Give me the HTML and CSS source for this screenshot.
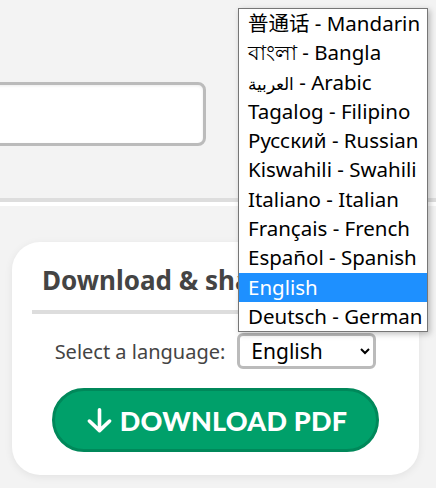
FILE: index.html
```html
<!DOCTYPE html>
<html lang="en">
<head>
<meta charset="utf-8">
<title>Download</title>
<link rel="stylesheet" href="styles.css">
</head>
<body>
<div class="top">
  <input class="search" type="text" aria-label="Name">
</div>
<div class="divider"></div>
<section class="card">
  <h2 class="card-title">Download &amp; share</h2>
  <div class="lang-row">
    <label class="lang-label" for="lang">Select a language:</label>
    <select id="lang" class="lang-select">
      <option>English</option>
    </select>
  </div>
  <button class="dl-btn" type="button">
    <svg class="dl-icon" viewBox="0 0 24 24" width="27" height="27" aria-hidden="true">
      <path d="M12 2.5V21M3 12.5L12 21l9-8.5" fill="none" stroke="#fff" stroke-width="3.2" stroke-linecap="round" stroke-linejoin="round"/>
    </svg>
    <span>DOWNLOAD PDF</span>
  </button>
</section>

<ul class="dropdown">
  <li>普通话 - Mandarin</li>
  <li>বাংলা - Bangla</li>
  <li><span class="ar">العربية</span> - Arabic</li>
  <li>Tagalog - Filipino</li>
  <li>Русский - Russian</li>
  <li>Kiswahili - Swahili</li>
  <li>Italiano - Italian</li>
  <li>Français - French</li>
  <li>Español - Spanish</li>
  <li class="selected">English</li>
  <li>Deutsch - German</li>
</ul>
</body>
</html>
```

FILE: styles.css
```css
* { box-sizing: border-box; }

html, body {
  margin: 0;
  padding: 0;
}

body {
  background: #f3f3f3;
  font-family: "Noto Sans", "Noto Sans CJK SC", sans-serif;
  color: #444;
  width: 436px;
  height: 488px;
  overflow: hidden;
  position: relative;
}

.top {
  height: 198px;
  padding-top: 82px;
}

.search {
  display: block;
  margin-left: -120px;
  width: 326px;
  height: 64px;
  border: 3px solid #bbb;
  border-radius: 8px;
  background: #fff;
  box-shadow: inset 0 1px 3px rgba(0,0,0,0.08);
  outline: none;
}

.divider {
  border-top: 4px solid #ddd;
  border-bottom: 4px solid #fff;
}

.card {
  margin: 36px 17px 0 12px;
  height: 233px;
  background: #fff;
  border-radius: 28px;
  box-shadow: 0 2px 8px rgba(0,0,0,0.07);
  padding: 21px 20px 0 20px;
}

.card-title {
  margin: 0;
  padding: 0 0 13px 10px;
  font-size: 26px;
  font-weight: 700;
  line-height: 34px;
  color: #444;
  border-bottom: 4px solid #ddd;
  white-space: nowrap;
}

.lang-row {
  display: flex;
  align-items: center;
  justify-content: center;
  gap: 12px;
  margin-top: 19px;
  height: 36px;
}

.lang-label {
  font-size: 20px;
  color: #444;
}

.lang-select {
  width: 139px;
  height: 36px;
  border: 3px solid #bbb;
  border-radius: 6px;
  background: #fff;
  font-family: "Noto Sans", sans-serif;
  font-size: 21px;
  color: #000;
  padding: 0 4px 0 7px;
}

.dl-btn {
  display: flex;
  align-items: center;
  justify-content: center;
  gap: 7px;
  width: 327px;
  height: 64px;
  margin: 19px auto 0;
  background: #00a06a;
  border: 3px solid #00885a;
  border-radius: 32px;
  color: #fff;
  font-family: "Lato", sans-serif;
  font-weight: 900;
  font-size: 27px;
  letter-spacing: 0.2px;
  cursor: pointer;
  padding: 0 0 0 2px;
}

.dl-icon { display: block; }

.dropdown {
  position: absolute;
  left: 238px;
  top: 8px;
  width: 190px;
  margin: 0;
  padding: 0;
  list-style: none;
  background: #fff;
  border: 1px solid #767676;
  box-shadow: 2px 2px 6px rgba(0,0,0,0.25);
  font-family: "Noto Sans", "Noto Sans CJK SC", sans-serif;
  font-size: 20.5px;
  color: #000;
}

.dropdown li {
  height: 29.3px;
  line-height: 29px;
  padding-left: 9px;
  white-space: nowrap;
  overflow: hidden;
}

.dropdown .ar {
  font-size: 17px;
}

.dropdown li.selected {
  background: #1e90ff;
  color: #fff;
}
```
